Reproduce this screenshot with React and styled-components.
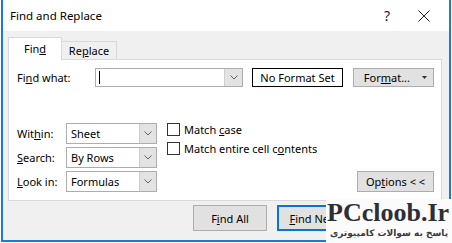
import React from "react";
import styled, { createGlobalStyle, css } from "styled-components";

const Global = createGlobalStyle`
  html, body { margin: 0; padding: 0; background: #ffffff; }
  body { font-family: "Noto Sans", "Segoe UI", sans-serif; font-size: 11px; color: #000; }
  #root { width: 452px; height: 243px; position: relative; overflow: hidden; }
`;

const Window = styled.div`
  box-sizing: border-box;
  margin-left: 1px;
  width: 450px;
  height: 242px;
  border: 2px solid #1c79d4;
  border-top: none;
  background: #f0f0f0;
  display: flex;
  flex-direction: column;
`;

const TitleBar = styled.div`
  height: 31px;
  background: #ffffff;
  display: flex;
  align-items: center;
  padding-left: 7px;
  font-size: 11.5px;
`;

const Title = styled.div`
  flex: 1;
`;

const TitleButton = styled.div`
  width: ${(p) => p.$w}px;
  display: flex;
  align-items: center;
  justify-content: center;
  font-size: 14px;
  color: #222;
`;

const Body = styled.div`
  flex: 1;
  padding: 7px 7px 0 5px;
  display: flex;
  flex-direction: column;
`;

const TabStrip = styled.div`
  display: flex;
  align-items: flex-end;
  height: 22px;
  position: relative;
  z-index: 1;
  margin-bottom: -1px;
`;

const Tab = styled.div`
  box-sizing: border-box;
  width: ${(p) => p.$w}px;
  height: ${(p) => (p.$active ? 23 : 19)}px;
  border: 1px solid #d9d9d9;
  border-bottom: ${(p) => (p.$active ? "none" : "1px solid #d9d9d9")};
  background: ${(p) => (p.$active ? "#ffffff" : "#f0f0f0")};
  ${(p) => !p.$active && css`border-left: none;`}
  display: flex;
  align-items: center;
  justify-content: center;
  padding-bottom: ${(p) => (p.$active ? 2 : 0)}px;
`;

const Panel = styled.div`
  box-sizing: border-box;
  height: 142px;
  width: 434px;
  border: 1px solid #d9d9d9;
  background: #ffffff;
  padding: 8px 7px 8px 8px;
  display: flex;
  flex-direction: column;
`;

const TopRow = styled.div`
  display: flex;
  align-items: center;
  height: 19px;
`;

const Label = styled.div`
  width: ${(p) => p.$w}px;
  flex: none;
  white-space: nowrap;
`;

const Combo = styled.div`
  box-sizing: border-box;
  width: ${(p) => p.$w}px;
  height: ${(p) => p.$h}px;
  border: 1px solid #adadad;
  background: #ffffff;
  display: flex;
  flex: none;
`;

const ComboText = styled.div`
  flex: 1;
  display: flex;
  align-items: center;
  padding-left: 4px;
  white-space: nowrap;
`;

const Caret = styled.div`
  width: 1px;
  height: 13px;
  background: #000;
  margin-left: -1px;
`;

const ArrowBox = styled.div`
  width: ${(p) => p.$w}px;
  background: #e3e3e3;
  border-left: 1px solid #cfcfcf;
  display: flex;
  align-items: center;
  justify-content: center;
`;

const FormatBox = styled.div`
  box-sizing: border-box;
  width: 91px;
  height: 19px;
  margin-left: 9px;
  border: 1px solid #000;
  display: flex;
  align-items: center;
  justify-content: center;
  white-space: nowrap;
`;

const Button = styled.div`
  box-sizing: border-box;
  width: ${(p) => p.$w}px;
  height: ${(p) => p.$h}px;
  background: #e1e1e1;
  border: 1px solid ${(p) => (p.$focus ? "#0078d7" : "#adadad")};
  ${(p) => p.$focus && css`box-shadow: inset 0 0 0 1px #0078d7;`}
  display: flex;
  align-items: center;
  justify-content: center;
  white-space: nowrap;
  flex: none;
`;

const FormatButton = styled(Button)`
  margin-left: 10px;
  justify-content: flex-end;
  padding-right: 6px;
  gap: 12px;
`;

const Lower = styled.div`
  margin-top: auto;
  display: flex;
  align-items: flex-end;
`;

const Fields = styled.div`
  display: flex;
  flex-direction: column;
  gap: 3px;
`;

const FieldRow = styled.div`
  display: flex;
  align-items: center;
`;

const Checks = styled.div`
  align-self: flex-start;
  margin-left: 10px;
  display: flex;
  flex-direction: column;
  gap: 6px;
`;

const CheckRow = styled.label`
  display: flex;
  align-items: center;
  gap: 4px;
  height: 13px;
  white-space: nowrap;
`;

const Box = styled.span`
  box-sizing: border-box;
  width: 13px;
  height: 13px;
  border: 1px solid #333;
  background: #fff;
  flex: none;
`;

const Spacer = styled.div`
  flex: 1;
`;

const ButtonRow = styled.div`
  display: flex;
  justify-content: flex-end;
  gap: 10px;
  padding-top: 4px;
  padding-right: 7px;
`;

const Watermark = styled.div`
  position: absolute;
  left: 326px;
  top: 199px;
  width: 126px;
  height: 44px;
  background: #fbfbfb;
  display: flex;
  flex-direction: column;
  align-items: stretch;
  overflow: hidden;
`;

const Brand = styled.div`
  font-family: "Liberation Serif", serif;
  font-weight: bold;
  font-size: 26px;
  line-height: 26px;
  color: #2e2e36;
  margin-top: 1px;
  padding-left: 1px;
`;

const Persian = styled.div`
  font-family: "DejaVu Sans", sans-serif;
  font-weight: bold;
  font-size: 9px;
  line-height: 14px;
  color: #3a3a3a;
  direction: rtl;
  text-align: center;
  white-space: nowrap;
`;

const Chevron = () => (
  <svg width="8" height="5" viewBox="0 0 8 5">
    <path d="M0.5 0.5 L4 4 L7.5 0.5" fill="none" stroke="#606060" strokeWidth="1" />
  </svg>
);

const Select = ({ value }) => (
  <Combo $w={91} $h={21}>
    <ComboText>{value}</ComboText>
    <ArrowBox $w={16}>
      <Chevron />
    </ArrowBox>
  </Combo>
);

export default function App() {
  return (
    <>
      <Global />
      <Window>
        <TitleBar>
          <Title>Find and Replace</Title>
          <TitleButton $w={24}>?</TitleButton>
          <TitleButton $w={50}>
            <svg width="12" height="12" viewBox="0 0 12 12">
              <path d="M0.5 0.5 L11.5 11.5 M11.5 0.5 L0.5 11.5" stroke="#222" strokeWidth="1" fill="none" />
            </svg>
          </TitleButton>
        </TitleBar>
        <Body>
          <TabStrip>
            <Tab $active $w={54}>
              <span>Fin<u>d</u></span>
            </Tab>
            <Tab $w={55}>
              <span>Re<u>p</u>lace</span>
            </Tab>
          </TabStrip>
          <Panel>
            <TopRow>
              <Label $w={78}>Fi<u>n</u>d what:</Label>
              <Combo $w={148} $h={19}>
                <ComboText>
                  <Caret />
                </ComboText>
                <ArrowBox $w={17}>
                  <Chevron />
                </ArrowBox>
              </Combo>
              <FormatBox>No Format Set</FormatBox>
              <FormatButton $w={81} $h={19}>
                <span>For<u>m</u>at...</span>
                <svg width="5" height="3" viewBox="0 0 5 3">
                  <path d="M0 0 L5 0 L2.5 3 Z" fill="#333" />
                </svg>
              </FormatButton>
            </TopRow>
            <Lower>
              <Fields>
                <FieldRow>
                  <Label $w={49}>Wit<u>h</u>in:</Label>
                  <Select value="Sheet" />
                </FieldRow>
                <FieldRow>
                  <Label $w={49}><u>S</u>earch:</Label>
                  <Select value="By Rows" />
                </FieldRow>
                <FieldRow>
                  <Label $w={49}><u>L</u>ook in:</Label>
                  <Select value="Formulas" />
                </FieldRow>
              </Fields>
              <Checks>
                <CheckRow>
                  <Box />
                  <span>Match <u>c</u>ase</span>
                </CheckRow>
                <CheckRow>
                  <Box />
                  <span>Match entire cell c<u>o</u>ntents</span>
                </CheckRow>
              </Checks>
              <Spacer />
              <Button $w={77} $h={21}>
                <span>Op<u>t</u>ions &lt; &lt;</span>
              </Button>
            </Lower>
          </Panel>
          <ButtonRow>
            <Button $w={74} $h={26}>
              <span>F<u>i</u>nd All</span>
            </Button>
            <Button $w={74} $h={26} $focus>
              <span><u>F</u>ind Next</span>
            </Button>
            <Button $w={74} $h={26}>
              <span>Close</span>
            </Button>
          </ButtonRow>
        </Body>
      </Window>
      <Watermark>
        <Brand>PCcloob.Ir</Brand>
        <Persian>پاسخ به سوالات کامپیوتری</Persian>
      </Watermark>
    </>
  );
}
